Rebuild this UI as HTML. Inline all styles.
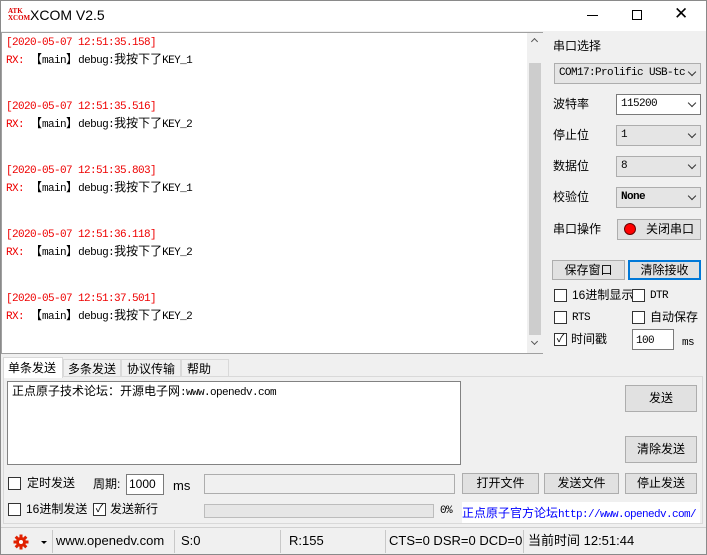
<!DOCTYPE html>
<html><head><meta charset="utf-8"><style>
*{margin:0;padding:0;box-sizing:border-box}
body{width:707px;height:555px;overflow:hidden;background:#f0f0f0;font-family:"Liberation Sans","Noto Sans CJK SC",sans-serif;font-size:12px;line-height:16px;color:#000;position:relative}
.a{position:absolute}
.win{left:0;top:0;width:707px;height:555px;border:1px solid #8a8a8a}
.tb{left:1px;top:1px;width:705px;height:30px;background:#fff}
.mono{font-family:"Liberation Mono","Noto Sans CJK SC",monospace;font-size:11px;letter-spacing:-0.6px}
.cjk{font-family:"Noto Sans CJK SC",sans-serif;font-size:12px;letter-spacing:0}
.rx{left:1px;top:32px;width:542px;height:322px;background:#fff;border:1px solid #a0a0a0}
.ln{position:absolute;left:4px;height:16px;line-height:16px;white-space:nowrap}
.red{color:#e00}
.combo{border:1px solid #adadad;background:#e5e5e5;height:21px;line-height:19px;padding-left:4px;white-space:nowrap;overflow:hidden}
.combo.w{background:#fff;border-color:#7a7a7a}
.chev{position:absolute;right:5px;top:5px;width:6px;height:6px;border-right:1px solid #333;border-bottom:1px solid #333;transform:rotate(45deg)}
.btn{border:1px solid #adadad;background:#e1e1e1;text-align:center;font-size:12px}
.cb{width:13px;height:13px;border:1px solid #333;background:#fff}
.lbl{font-size:12px;line-height:16px;white-space:nowrap}
.sep{top:530px;width:1px;height:23px;background:#c8c8c8}
.st{top:533px;font-size:13px;line-height:16px;white-space:nowrap}
</style></head><body>
<div class="a win"></div>
<div class="a tb"></div>
<div class="a" style="left:8px;top:8px;width:20px;height:16px;color:#d00;font-size:7px;font-weight:bold;line-height:7px;font-family:'Liberation Serif',serif">ATK<br>XCOM</div>
<div class="a" style="left:30px;top:7px;font-size:14px">XCOM V2.5</div>
<div class="a" style="left:587px;top:15px;width:11px;height:1px;background:#000"></div>
<div class="a" style="left:632px;top:10px;width:10px;height:10px;border:1px solid #000"></div>
<div class="a" style="left:674px;top:6px;font-size:17px;font-weight:300">✕</div>

<div class="a rx">
<div class="ln mono red" style="top:2px">[2020-05-07 12:51:35.158]</div>
<div class="ln mono" style="top:18px"><span class="red">RX: </span><span class="cjk">【</span>main<span class="cjk">】</span>debug:<span class="cjk">我按下了</span>KEY_1</div>
<div class="ln mono red" style="top:66px">[2020-05-07 12:51:35.516]</div>
<div class="ln mono" style="top:82px"><span class="red">RX: </span><span class="cjk">【</span>main<span class="cjk">】</span>debug:<span class="cjk">我按下了</span>KEY_2</div>
<div class="ln mono red" style="top:130px">[2020-05-07 12:51:35.803]</div>
<div class="ln mono" style="top:146px"><span class="red">RX: </span><span class="cjk">【</span>main<span class="cjk">】</span>debug:<span class="cjk">我按下了</span>KEY_1</div>
<div class="ln mono red" style="top:194px">[2020-05-07 12:51:36.118]</div>
<div class="ln mono" style="top:210px"><span class="red">RX: </span><span class="cjk">【</span>main<span class="cjk">】</span>debug:<span class="cjk">我按下了</span>KEY_2</div>
<div class="ln mono red" style="top:258px">[2020-05-07 12:51:37.501]</div>
<div class="ln mono" style="top:274px"><span class="red">RX: </span><span class="cjk">【</span>main<span class="cjk">】</span>debug:<span class="cjk">我按下了</span>KEY_2</div>
<div class="a" style="left:525px;top:0;width:16px;height:320px;background:#f0f0f0"></div>
<div class="a" style="left:527px;top:30px;width:12px;height:272px;background:#cdcdcd"></div>
<div class="a" style="left:530px;top:6px;width:5px;height:5px;border-left:1px solid #555;border-top:1px solid #555;transform:rotate(45deg)"></div>
<div class="a" style="left:530px;top:306px;width:5px;height:5px;border-right:1px solid #555;border-bottom:1px solid #555;transform:rotate(45deg)"></div>
</div>

<div class="a lbl" style="left:553px;top:38px">串口选择</div>
<div class="a combo mono" style="left:554px;top:63px;width:147px">COM17:Prolific USB-tc<span class="chev"></span></div>
<div class="a lbl" style="left:553px;top:96px">波特率</div>
<div class="a combo w mono" style="left:616px;top:94px;width:85px">115200<span class="chev"></span></div>
<div class="a lbl" style="left:553px;top:127px">停止位</div>
<div class="a combo mono" style="left:616px;top:125px;width:85px">1<span class="chev"></span></div>
<div class="a lbl" style="left:553px;top:158px">数据位</div>
<div class="a combo mono" style="left:616px;top:156px;width:85px">8<span class="chev"></span></div>
<div class="a lbl" style="left:553px;top:189px">校验位</div>
<div class="a combo mono" style="left:616px;top:187px;width:85px;font-weight:bold">None<span class="chev"></span></div>
<div class="a lbl" style="left:553px;top:221px">串口操作</div>
<div class="a btn" style="left:617px;top:219px;width:84px;height:21px;line-height:19px;padding-left:22px">关闭串口</div>
<div class="a" style="left:624px;top:223px;width:12px;height:12px;border-radius:50%;background:#f00;border:1px solid #600"></div>
<div class="a btn" style="left:552px;top:260px;width:73px;height:20px;line-height:18px">保存窗口</div>
<div class="a btn" style="left:628px;top:260px;width:73px;height:20px;line-height:16px;border:2px solid #0078d7">清除接收</div>
<div class="a cb" style="left:554px;top:289px"></div><div class="a lbl" style="left:572px;top:287px">16进制显示</div>
<div class="a cb" style="left:632px;top:289px"></div><div class="a mono" style="left:650px;top:288px">DTR</div>
<div class="a cb" style="left:554px;top:311px"></div><div class="a mono" style="left:572px;top:310px">RTS</div>
<div class="a cb" style="left:632px;top:311px"></div><div class="a lbl" style="left:650px;top:309px">自动保存</div>
<div class="a cb" style="left:554px;top:333px;font-size:11px;line-height:11px;text-align:center">✓</div><div class="a lbl" style="left:571px;top:331px">时间戳</div>
<div class="a" style="left:632px;top:329px;width:42px;height:21px;background:#fff;border:1px solid #7a7a7a;padding:1px 3px"><span class="mono">100</span></div>
<div class="a mono" style="left:682px;top:335px">ms</div>

<div class="a" style="left:3px;top:376px;width:700px;height:148px;border:1px solid #d9d9d9;background:#f0f0f0"></div>
<div class="a lbl" style="left:3px;top:357px;width:60px;height:21px;background:#fff;border:1px solid #d9d9d9;border-bottom:none;padding:2px 0 0 4px">单条发送</div>
<div class="a lbl" style="left:63px;top:359px;width:58px;height:18px;border:1px solid #d9d9d9;padding:1px 0 0 4px">多条发送</div>
<div class="a lbl" style="left:121px;top:359px;width:60px;height:18px;border:1px solid #d9d9d9;padding:1px 0 0 5px">协议传输</div>
<div class="a lbl" style="left:181px;top:359px;width:48px;height:18px;border:1px solid #d9d9d9;padding:1px 0 0 5px">帮助</div>
<div class="a" style="left:7px;top:381px;width:454px;height:84px;background:#fff;border:1px solid #828282"></div>
<div class="a" style="left:12px;top:383px;white-space:nowrap"><span class="cjk">正点原子技术论坛：开源电子网</span><span class="mono">:www.openedv.com</span></div>
<div class="a btn" style="left:625px;top:385px;width:72px;height:27px;line-height:25px">发送</div>
<div class="a btn" style="left:625px;top:436px;width:72px;height:27px;line-height:25px">清除发送</div>
<div class="a cb" style="left:8px;top:477px"></div><div class="a lbl" style="left:27px;top:475px">定时发送</div>
<div class="a lbl" style="left:93px;top:476px">周期:</div>
<div class="a" style="left:126px;top:474px;width:38px;height:21px;background:#fff;border:1px solid #7a7a7a;padding:1px 2px;font-size:12px">1000</div>
<div class="a" style="left:173px;top:478px;font-size:13px">ms</div>
<div class="a" style="left:204px;top:474px;width:251px;height:20px;border:1px solid #adadad;background:#f0f0f0"></div>
<div class="a btn" style="left:462px;top:473px;width:77px;height:21px;line-height:19px">打开文件</div>
<div class="a btn" style="left:544px;top:473px;width:75px;height:21px;line-height:19px">发送文件</div>
<div class="a btn" style="left:625px;top:473px;width:72px;height:21px;line-height:19px">停止发送</div>
<div class="a cb" style="left:8px;top:503px"></div><div class="a lbl" style="left:26px;top:501px">16进制发送</div>
<div class="a cb" style="left:93px;top:503px;font-size:11px;line-height:11px;text-align:center">✓</div><div class="a lbl" style="left:110px;top:501px">发送新行</div>
<div class="a" style="left:204px;top:504px;width:230px;height:14px;border:1px solid #bcbcbc;background:#e6e6e6"></div>
<div class="a mono" style="left:440px;top:503px">0%</div>
<div class="a" style="left:462px;top:502px;width:238px;height:21px;background:#fff;color:#00f;padding-top:3px;white-space:nowrap"><span class="cjk">正点原子官方论坛</span><span class="mono">http://www.openedv.com/</span></div>

<div class="a" style="left:1px;top:527px;width:705px;height:1px;background:#d0d0d0"></div>
<svg class="a" style="left:13px;top:534px" width="16" height="16" viewBox="0 0 16 16"><g fill="#e02000"><circle cx="8" cy="8" r="5"/><rect x="6.5" y="0.5" width="3" height="15"/><rect x="0.5" y="6.5" width="15" height="3"/><rect x="6.5" y="0.5" width="3" height="15" transform="rotate(45 8 8)"/><rect x="6.5" y="0.5" width="3" height="15" transform="rotate(-45 8 8)"/></g><circle cx="8" cy="8" r="2" fill="#fff"/></svg>
<div class="a" style="left:41px;top:541px;width:0;height:0;border-left:3px solid transparent;border-right:3px solid transparent;border-top:3px solid #000"></div>
<div class="a sep" style="left:52px"></div><div class="a st" style="left:56px">www.openedv.com</div>
<div class="a sep" style="left:174px"></div><div class="a st" style="left:181px">S:0</div>
<div class="a sep" style="left:280px"></div><div class="a st" style="left:289px">R:155</div>
<div class="a sep" style="left:385px"></div><div class="a st" style="left:389px">CTS=0 DSR=0 DCD=0</div>
<div class="a sep" style="left:523px"></div><div class="a st" style="left:528px">当前时间 12:51:44</div>
</body></html>
